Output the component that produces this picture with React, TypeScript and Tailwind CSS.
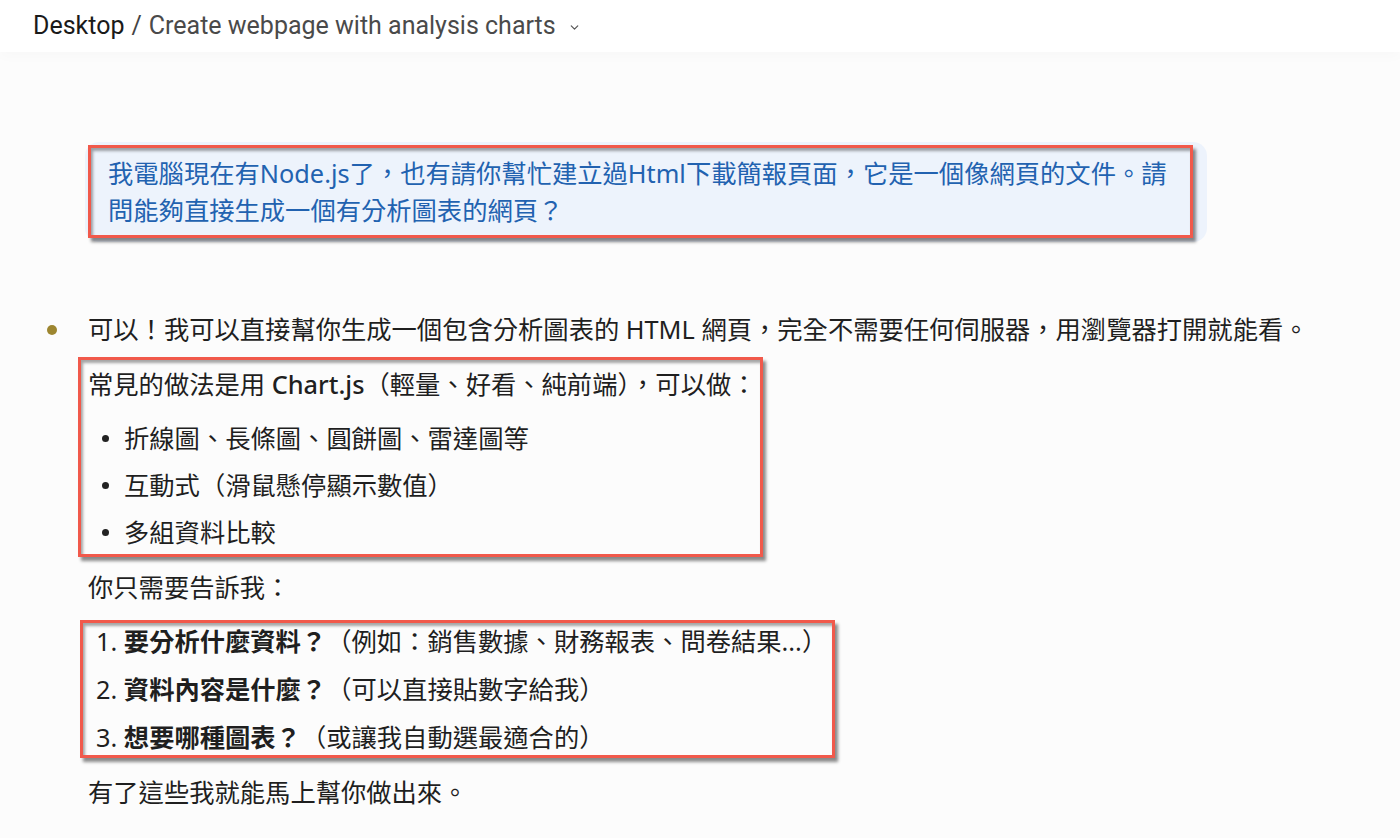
import { ChevronDown } from "lucide-react";

const redBox =
  "border-[3px] border-[#f1594b] shadow-[3px_4px_3px_rgba(0,0,0,0.45),inset_2px_3px_3px_rgba(0,0,0,0.35)]";

export default function App() {
  return (
    <div className="min-h-screen bg-[#fcfcfc] font-['Noto_Sans','Noto_Sans_CJK_TC',sans-serif] text-[#1f1f1f]">
      {/* Top bar */}
      <header className="flex h-[52px] items-center bg-white pl-[33px] shadow-[0_6px_10px_rgba(0,0,0,0.015)]">
        <span className="font-['Roboto','Noto_Sans_CJK_TC',sans-serif] text-[25px] text-[#1a1a1a]">
          Desktop
        </span>
        <span className="mx-[7px] font-['Roboto',sans-serif] text-[25px] text-[#444]">/</span>
        <span className="font-['Roboto',sans-serif] text-[25px] text-[#4a4a4a]">
          Create webpage with analysis charts
        </span>
        <ChevronDown className="ml-[12px] mt-[2px] h-[13px] w-[13px] text-[#555]" strokeWidth={2.2} />
      </header>

      <main className="pt-[90px]">
        {/* User message */}
        <div className="ml-[85px] w-[1122px] rounded-[14px] bg-[#edf3fc] pb-[4px] pl-[3px] pt-[3px]">
          <div className={`${redBox} w-[1105px] pb-[6px] pl-[17px] pr-[10px] pt-[7px]`}>
            <p className="whitespace-nowrap text-[25.3px] leading-[37px] text-[#2262b0]">
              我電腦現在有Node.js了，也有請你幫忙建立過Html下載簡報頁面，它是一個像網頁的文件。請
              <br />
              問能夠直接生成一個有分析圖表的網頁？
            </p>
          </div>
        </div>

        {/* Assistant message */}
        <div className="ml-[47px] mt-[68px] flex gap-[31px]">
          <span className="mt-[14.5px] h-[10px] w-[10px] shrink-0 rounded-full bg-[#9d8630]" />
          <div className="text-[25.3px] leading-[39px]">
            <p className="whitespace-nowrap">
              可以！我可以直接幫你生成一個包含分析圖表的 HTML 網頁，完全不需要任何伺服器，用瀏覽器打開就能看。
            </p>

            <div className={`${redBox} ml-[-10px] mt-[7.5px] w-[685px] pb-[1.5px] pl-[7px] pt-[5.5px]`}>
              <p className="whitespace-nowrap">
                常見的做法是用 <span className="font-medium">Chart.js</span>（輕量、好看、純前端），可以做：
              </p>
              <ul className="mt-[15px] flex flex-col gap-[8px]">
                {["折線圖、長條圖、圓餅圖、雷達圖等", "互動式（滑鼠懸停顯示數值）", "多組資料比較"].map((t) => (
                  <li key={t} className="flex items-center">
                    <span className="ml-[13.5px] h-[7px] w-[7px] shrink-0 rounded-full bg-[#222]" />
                    <span className="ml-[15.5px]">{t}</span>
                  </li>
                ))}
              </ul>
            </div>

            <p className="mt-[11.5px]">你只需要告訴我：</p>

            <div className={`${redBox} ml-[-8px] mt-[12.5px] w-[755px] pl-[13px]`}>
              <ol className="flex flex-col gap-[12px] leading-[36px]">
                <li className="whitespace-nowrap">
                  1. <span className="font-bold">要分析什麼資料？</span>（例如：銷售數據、財務報表、問卷結果...）
                </li>
                <li className="whitespace-nowrap">
                  2. <span className="font-bold">資料內容是什麼？</span>（可以直接貼數字給我）
                </li>
                <li className="whitespace-nowrap">
                  3. <span className="font-bold">想要哪種圖表？</span>（或讓我自動選最適合的）
                </li>
              </ol>
            </div>

            <p className="mt-[15.5px]">有了這些我就能馬上幫你做出來。</p>
          </div>
        </div>
      </main>
    </div>
  );
}
